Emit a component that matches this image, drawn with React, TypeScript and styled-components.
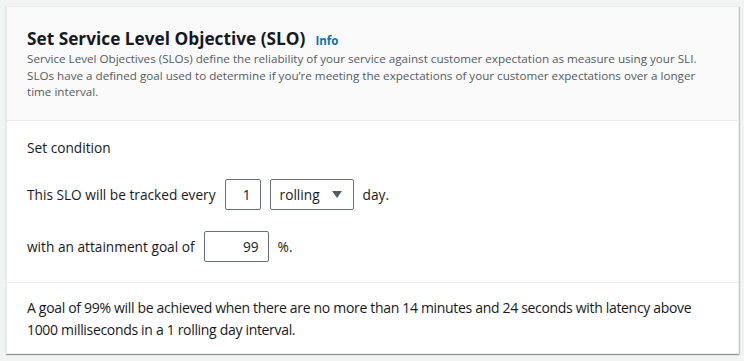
import React from "react";
import styled, { createGlobalStyle } from "styled-components";

const Global = createGlobalStyle`
  html, body { margin: 0; padding: 0; background: #f2f3f3; }
  body { font-family: "Open Sans", "Liberation Sans", sans-serif; color: #16191f; }
`;

const Page = styled.div`
  padding: 6px 6px 8px 6px;
`;

const Card = styled.section`
  width: 731px;
  background: #ffffff;
  border: 1px solid #eaeded;
  box-shadow: 0 1px 1px 0 rgba(0, 28, 36, 0.3), 1px 1px 1px 0 rgba(0, 28, 36, 0.15);
`;

const Header = styled.header`
  background: #fafafa;
  border-bottom: 1px solid #eaeded;
  padding: 21px 20px 19px 20px;
`;

const TitleRow = styled.div`
  display: flex;
  align-items: baseline;
  gap: 10px;
`;

const Title = styled.h2`
  margin: 0;
  font-size: 17.25px;
  line-height: 22px;
  font-weight: 700;
  color: #16191f;
`;

const InfoLink = styled.a`
  font-size: 11.5px;
  font-weight: 700;
  color: #0073bb;
  text-decoration: none;
`;

const Description = styled.p`
  margin: 1px 0 0 0;
  font-size: 11.65px;
  line-height: 16.5px;
  color: #545b64;
  white-space: nowrap;
`;

const Body = styled.div`
  padding: 17px 20px 20px 20px;
  border-bottom: 1px solid #eaeded;
  display: flex;
  flex-direction: column;
  gap: 21px;
`;

const Label = styled.div`
  font-size: 13.7px;
  line-height: 20px;
`;

const Row = styled.div`
  display: flex;
  align-items: center;
  gap: 9px;
  font-size: 13.7px;
`;

const NumberBox = styled.div<{ $w: number }>`
  width: ${(p) => p.$w}px;
  height: 31px;
  box-sizing: border-box;
  border: 1px solid #687078;
  border-radius: 2px;
  display: flex;
  align-items: center;
  justify-content: flex-end;
  padding-right: 9px;
  font-size: 13.7px;
  background: #fff;
`;

const Select = styled.div`
  width: 84px;
  height: 31px;
  box-sizing: border-box;
  border: 1px solid #687078;
  border-radius: 2px;
  display: flex;
  align-items: center;
  justify-content: space-between;
  padding: 0 11px 0 9px;
  font-size: 13.7px;
  background: #fff;
`;

const Caret = styled.span`
  width: 0;
  height: 0;
  border-left: 5px solid transparent;
  border-right: 5px solid transparent;
  border-top: 7px solid #545b64;
`;

const Footer = styled.div`
  padding: 14px 20px 12px 20px;
  font-size: 14px;
  line-height: 22px;
  letter-spacing: -0.32px;
  white-space: nowrap;
`;

export default function App() {
  return (
    <>
      <Global />
      <Page>
        <Card>
          <Header>
            <TitleRow>
              <Title>Set Service Level Objective (SLO)</Title>
              <InfoLink href="#">Info</InfoLink>
            </TitleRow>
            <Description>
              Service Level Objectives (SLOs) define the reliability of your service against customer expectation as measure using your SLI.
              <br />
              SLOs have a defined goal used to determine if you’re meeting the expectations of your customer expectations over a longer
              <br />
              time interval.
            </Description>
          </Header>
          <Body>
            <Label>Set condition</Label>
            <Row>
              <span>This SLO will be tracked every</span>
              <NumberBox $w={36}>1</NumberBox>
              <Select>
                <span>rolling</span>
                <Caret />
              </Select>
              <span>day.</span>
            </Row>
            <Row>
              <span>with an attainment goal of</span>
              <NumberBox $w={65}>99</NumberBox>
              <span>%.</span>
            </Row>
          </Body>
          <Footer>
            A goal of 99% will be achieved when there are no more than 14 minutes and 24 seconds with latency above
            <br />
            1000 milliseconds in a 1 rolling day interval.
          </Footer>
        </Card>
      </Page>
    </>
  );
}
